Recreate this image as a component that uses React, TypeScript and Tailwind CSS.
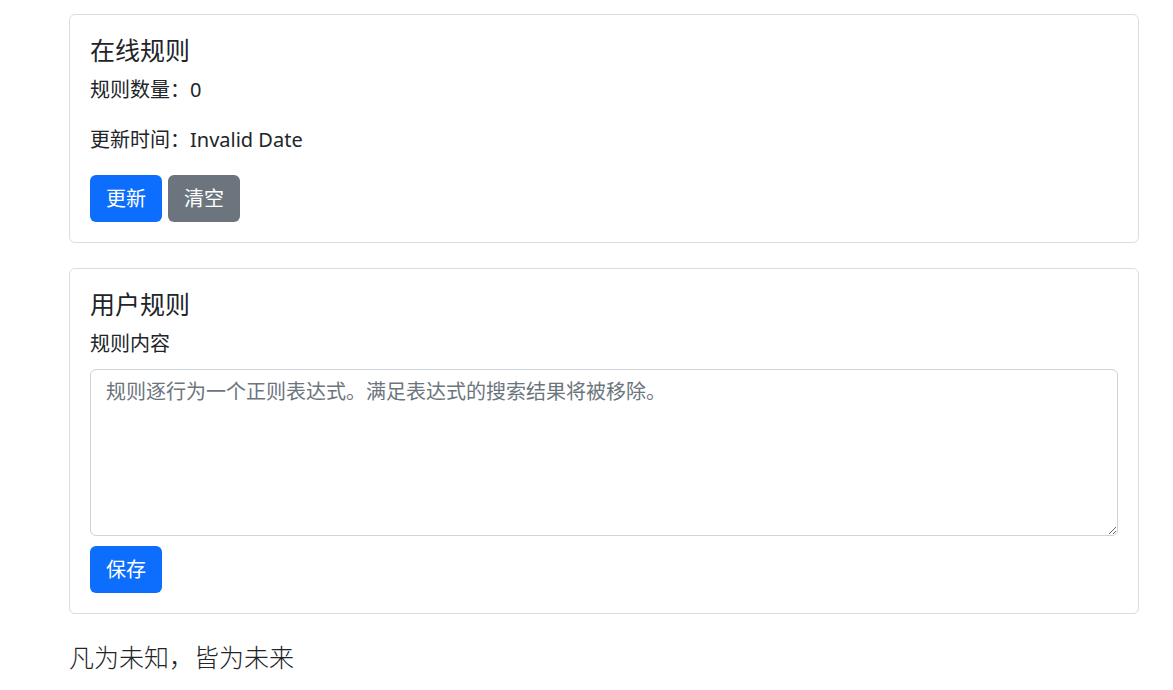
const FONT = "font-['Noto_Sans','Noto_Sans_CJK_SC',sans-serif]"

function Card({ title, children }: { title: string; children: React.ReactNode }) {
  return (
    <div className="rounded-[6px] border border-[#dcdcdd] bg-white p-[20px]">
      <h4 className="mb-[10px] text-[25px] leading-[30px] font-normal text-[#212529]">{title}</h4>
      {children}
    </div>
  )
}

export default function App() {
  return (
    <div className={`${FONT} min-h-screen bg-white text-[#212529]`}>
      <div className="ml-[69px] w-[1070px] pt-[14px]">
        <Card title="在线规则">
          <p className="mb-[20px] text-[20px] leading-[30px]">规则数量：0</p>
          <p className="mb-[20px] text-[20px] leading-[30px]">更新时间：Invalid Date</p>
          <div className="flex gap-[6px]">
            <button className="h-[47px] rounded-[6px] bg-[#0d6efd] px-[16px] text-[20px] text-white">更新</button>
            <button className="h-[47px] rounded-[6px] bg-[#6c757d] px-[16px] text-[20px] text-white">清空</button>
          </div>
        </Card>

        <div className="mt-[25px]">
          <Card title="用户规则">
            <label className="mb-[10px] block text-[20px] leading-[30px]">规则内容</label>
            <textarea
              rows={5}
              className="block h-[167px] w-full rounded-[6px] border border-[#ced4da] px-[15px] py-[7px] text-[20px] leading-[30px] text-[#212529] outline-none placeholder:text-[#6c757d]"
              placeholder="规则逐行为一个正则表达式。满足表达式的搜索结果将被移除。"
            />
            <button className="mt-[10px] h-[47px] rounded-[6px] bg-[#0d6efd] px-[16px] text-[20px] text-white">保存</button>
          </Card>
        </div>

        <p className="mt-[25px] text-[25px] leading-[37.5px] font-light text-[#212529]">凡为未知，皆为未来</p>
      </div>
    </div>
  )
}
